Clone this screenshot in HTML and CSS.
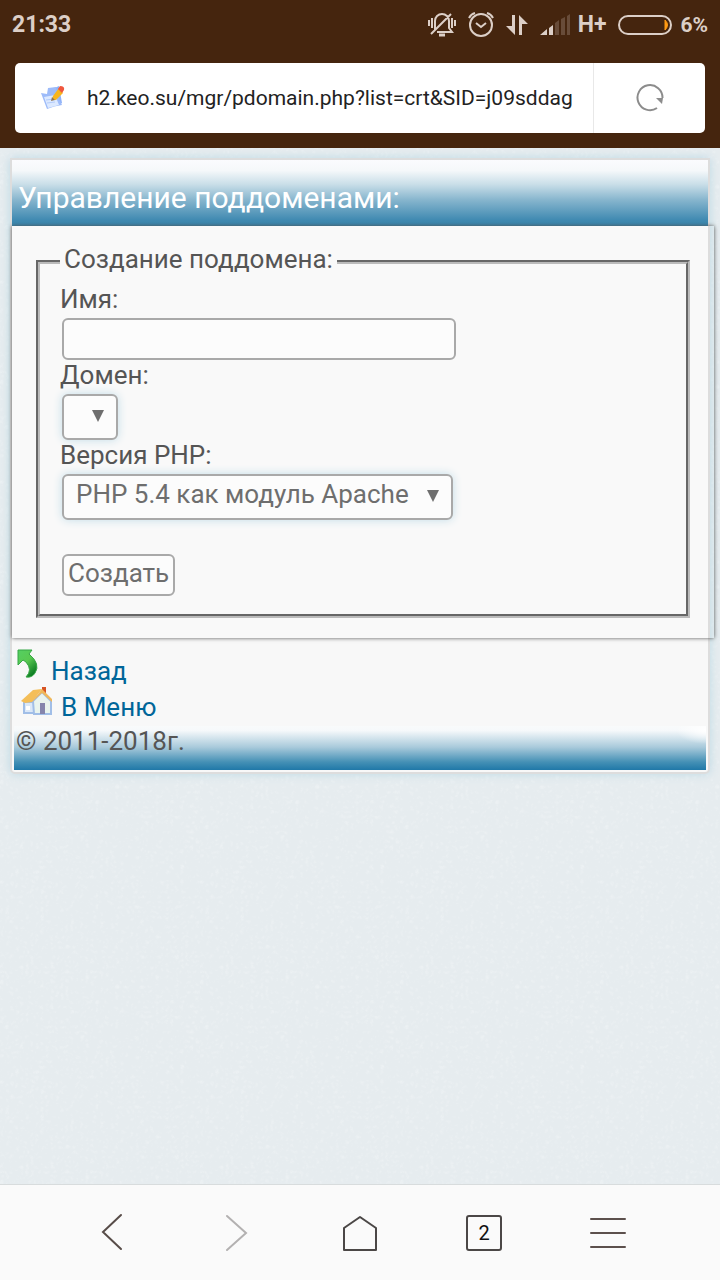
FILE: index.html
```html
<!DOCTYPE html>
<html lang="ru">
<head>
    <meta charset="UTF-8">
    <meta name="viewport" content="width=device-width, initial-scale=1.0">
    <title>Управление поддоменами</title>
    <link rel="stylesheet" href="styles.css">
</head>
<body>
    <header class="browser-top">
        <div class="status-bar">
            <span class="clock">21:33</span>
            <div class="status-icons">
                <svg width="28" height="26" viewBox="0 0 28 26" fill="none" stroke="#dccfc7" stroke-width="2">
                    <path d="M7 18V9a7 7 0 0 1 14 0v7l3 4H9M3 22L23 2M1 8v6M4 6v10M24 6v10M27 8v6"/>
                    <path d="M11 23h6" stroke-width="3"/>
                </svg>
                <svg width="26" height="26" viewBox="0 0 26 26" fill="none" stroke="#dccfc7" stroke-width="2">
                    <circle cx="13" cy="13" r="11"/>
                    <path d="M8 11l5 4 5-4M1 6q2-4 6-5M25 6q-2-4-6-5"/>
                </svg>
                <svg width="22" height="22" viewBox="0 0 22 22" fill="#dccfc7">
                    <path d="M6 1h3v20L0 12h6zM13 21h3V10h6L13 1z"/>
                </svg>
                <svg class="signal" width="30" height="22" viewBox="0 0 30 22" fill="#dccfc7">
                    <path d="M0 21l7-6v6zM9 14l4-3v10H9z"/>
                    <path d="M15 9l4-3v15h-4zM21 5l4-2v18h-4zM27 2l3-2v21h-3z" fill="#684c39"/>
                </svg>
                <span>H+</span>
                <svg width="54" height="20" viewBox="0 0 54 20">
                    <rect x="1" y="1" width="52" height="18" rx="9" fill="none" stroke="#dccfc7" stroke-width="2"/>
                    <path d="M47 5q5 5 0 10z" fill="#ff9a13" stroke="#ff9a13"/>
                </svg>
                <span class="percent">6%</span>
            </div>
        </div>
        <div class="address-bar">
            <svg class="favicon" width="24" height="24" viewBox="0 0 24 24">
                <path d="M7 2q6 1 11-2l3 17-6 3z" fill="#8fb2f8"/>
                <path d="M0 7l6 1 1-6 8-1 2 10 4 8q-8 1-15 4z" fill="#9dbbf9"/>
                <path d="M3 11l11-2 4 10-11 3z" fill="#dce9ff"/>
                <path d="M5 14l8-1M6 17l8-1" stroke="#b3ccfb"/>
                <path d="M11 14l1-4 6-8 4 5-7 7z" fill="#f8b51c"/>
                <path d="M17 3l2-3q5 0 4 4l-2 3z" fill="#f0573e"/>
                <path d="M10 15l1-4 3 3z" fill="#8d7658"/>
            </svg>
            <input class="url" type="text" aria-label="Адрес" value="h2.keo.su/mgr/pdomain.php?list=crt&amp;SID=j09sddagk">
            <button class="reload" type="button" aria-label="Обновить">
                <svg width="28" height="28" viewBox="0 0 28 28">
                    <path d="M21 24A12.5 12.5 0 1 1 26.5 14" fill="none" stroke="#8c8c8c" stroke-width="2"/>
                    <path d="M20 14h7l-1 6z" fill="#8c8c8c"/>
                </svg>
            </button>
        </div>
    </header>

    <main class="page">
        <div class="card">
            <h1>Управление поддоменами:</h1>
            <form class="form-box">
                <fieldset>
                    <legend>Создание поддомена:</legend>
                    <label for="name">Имя:</label>
                    <input id="name" class="name" type="text">
                    <label for="domain">Домен:</label>
                    <select id="domain" class="domain"></select>
                    <label for="php">Версия PHP:</label>
                    <select id="php" class="php">
                        <option>PHP 5.4 как модуль Apache</option>
                    </select>
                    <button class="submit" type="button">Создать</button>
                </fieldset>
            </form>
            <nav class="links">
                <a href="#">
                    <svg class="back-icon" width="22" height="30" viewBox="0 0 22 30">
                        <defs>
                            <linearGradient id="green" x2="0.7" y2="1">
                                <stop offset="0" stop-color="#55cf62"/>
                                <stop offset="0.5" stop-color="#59c951"/>
                                <stop offset="1" stop-color="#087820"/>
                            </linearGradient>
                        </defs>
                        <path d="M2 1h14l-3 4q12 10 6 19-3 5-9 4 7-7 0-15l-3-2-5 5z" fill="url(#green)" stroke="#37a646"/>
                    </svg>
                    Назад
                </a>
                <a href="#">
                    <svg class="home-icon" width="32" height="30" viewBox="0 0 32 30">
                        <path d="M21 0h4v9h-4z" fill="#d65324"/>
                        <path d="M3 15h11v11H3z" fill="#dbe8f8" stroke="#a1bee7" stroke-width="2"/>
                        <path d="M12 14l9-9 9 9v13H13z" fill="#e9f4ee" stroke="#a1bee7" stroke-width="2"/>
                        <path d="M0 14L12 3l9-1-10 13-7 1z" fill="#f4be58"/>
                        <path d="M11 15L21 2l10 10v3L21 6z" fill="#f0b85a"/>
                        <path d="M19 16h5v11h-5z" fill="#8585ac"/>
                        <path d="M5 19h4v4H5z" fill="#fff"/>
                    </svg>
                    В Меню
                </a>
            </nav>
            <footer>© 2011-2018г.</footer>
        </div>
    </main>

    <nav class="bottom-bar">
        <button type="button" aria-label="Назад">
            <svg width="40" height="40" viewBox="0 0 40 40" fill="none" stroke="#574c48" stroke-width="2" stroke-linecap="round">
                <path d="M29 2L11 19l18 17"/>
            </svg>
        </button>
        <button type="button" aria-label="Вперёд">
            <svg width="40" height="40" viewBox="0 0 40 40" fill="none" stroke="#b3b1b1" stroke-width="2" stroke-linecap="round">
                <path d="M11 3l19 17-19 17"/>
            </svg>
        </button>
        <button type="button" aria-label="Домой">
            <svg width="40" height="40" viewBox="0 0 40 40" fill="none" stroke="#4b4746" stroke-width="2" stroke-linejoin="round">
                <path d="M4 15L20 4l16 11v22H4z"/>
            </svg>
        </button>
        <button type="button" aria-label="Вкладки">
            <span class="tab-count">2</span>
        </button>
        <button type="button" aria-label="Меню">
            <svg width="40" height="40" viewBox="0 0 40 40" stroke="#5c504c" stroke-width="2" stroke-linecap="round">
                <path d="M3 6h34M3 20h34M3 34h34"/>
            </svg>
        </button>
    </nav>
</body>
</html>
```
FILE: styles.css
```css
* {
    box-sizing: border-box;
}

body {
    font-family: Roboto, sans-serif;
    font-size: 26px;
    color: #555;
    background-color: #e6ecef;
    background-image: url("data:image/svg+xml,%3Csvg xmlns='http://www.w3.org/2000/svg' width='200' height='200'%3E%3Cfilter id='n'%3E%3CfeTurbulence baseFrequency='0.2' numOctaves='3' stitchTiles='stitch'/%3E%3CfeColorMatrix values='0 0 0 0 1 0 0 0 0 1 0 0 0 0 1 1.6 0 0 0 -0.5'/%3E%3C/filter%3E%3Crect width='200' height='200' filter='url(%23n)' opacity='.3'/%3E%3C/svg%3E");
    margin: 0;
    min-height: 100vh;
    display: flex;
    flex-direction: column;
}

button,
input,
select {
    font-family: inherit;
    font-size: inherit;
    margin: 0;
}

svg {
    display: block;
}

/* browser */
.browser-top {
    background-color: #45250e;
    padding: 0 15px 15px;
}

.status-bar {
    height: 63px;
    margin: 0 -3px;
    padding-bottom: 14px;
    display: flex;
    justify-content: space-between;
    align-items: center;
    color: #dccfc7;
    font-size: 23px;
    font-weight: bold;
}

.status-icons {
    display: flex;
    align-items: center;
    gap: 12px;
}

.status-icons .percent {
    font-size: 21px;
    margin-left: -4px;
}

.signal {
    margin-right: -4px;
}

.address-bar {
    height: 70px;
    background-color: #fff;
    border-radius: 5px;
    display: flex;
    align-items: center;
    padding-left: 26px;
}

.favicon {
    flex: none;
}

.url {
    flex: 1;
    min-width: 0;
    margin: 0 20px 0 22px;
    padding: 0;
    border: none;
    background: none;
    color: #222;
    font-size: 21px;
}

.reload {
    width: 112px;
    height: 70px;
    padding: 0;
    border: none;
    border-left: 1px solid #e8e8e8;
    background: none;
    display: flex;
    justify-content: center;
    align-items: center;
}

/* page */
.page {
    flex: 1;
    padding: 10px;
}

.card {
    background-color: #f8f8f8;
    border: 2px solid #ddd;
    border-radius: 0 0 5px 5px;
    box-shadow: 0 0 10px #bdd9e5;
}

h1 {
    margin: 0;
    padding: 20px 6px 10px;
    font-size: 30px;
    font-weight: normal;
    line-height: 36px;
    color: #fff;
    background: linear-gradient(#fbfbfe, #f5f8fa 16%, #c9dee8 37%, #88b6ce 60%, #428bb2 90%, #3785ad);
}

.form-box {
    margin-right: -6px;
    padding: 17px 24px 20px;
    box-shadow: 0 0 4px #555;
    background: linear-gradient(to left, transparent 6px, #f9f9f9 6px);
}

fieldset {
    margin: 0;
    padding: 3px 20px 18px;
    border: 4px groove #bbb;
}

legend {
    padding: 0 4px 6px;
    line-height: 32px;
}

label {
    display: block;
    line-height: 30px;
}

.name,
.domain,
.php,
.submit {
    display: block;
    margin: 4px 2px 0;
    border: 2px solid #a9a9a9;
    border-radius: 6px;
    background-color: #fcfcfc;
    color: #6e6e6e;
}

.name {
    width: 394px;
    max-width: 100%;
    height: 42px;
}

.domain,
.php {
    appearance: none;
    height: 46px;
    padding: 0 42px 6px 12px;
    box-shadow: 0 0 10px #c3dde8;
    background-image: url("data:image/svg+xml,%3Csvg xmlns='http://www.w3.org/2000/svg' width='12' height='12'%3E%3Cpath d='M0 0h12L6 12z' fill='%236e6e6e'/%3E%3C/svg%3E");
    background-repeat: no-repeat;
    background-position: right 12px top 14px;
}

.domain {
    width: 56px;
    padding-right: 28px;
}

.submit {
    height: 42px;
    margin-top: 34px;
    padding: 0 4px 4px;
}

.links {
    padding: 15px 4px 1px;
}

.links a {
    display: flex;
    height: 36px;
    line-height: 36px;
    color: #069;
    text-decoration: none;
}

.back-icon {
    margin-right: 13px;
    margin-top: -4px;
}

.home-icon {
    margin-left: 5px;
    margin-right: 8px;
    margin-top: -2px;
}

footer {
    margin: 0 2px 2px;
    padding: 0 2px 14px;
    line-height: 30px;
    background:
        radial-gradient(ellipse 30px 14px at right 0 top 4px, #fff, transparent),
        linear-gradient(#f9fbfb, #f6f9fb 10%, #a9cadb 48%, #4490b5 82%, #2078a8);
}

/* bottom toolbar */
.bottom-bar {
    height: 96px;
    padding: 0 50px;
    border-top: 1px solid #d8dcdd;
    background-color: #fafafa;
    display: flex;
}

.bottom-bar button {
    flex: 1;
    padding: 0;
    border: none;
    background: none;
    display: flex;
    justify-content: center;
    align-items: center;
}

.tab-count {
    width: 36px;
    height: 36px;
    border: 2px solid #4b4746;
    border-radius: 3px;
    color: #111;
    font-size: 20px;
    line-height: 32px;
}
```
